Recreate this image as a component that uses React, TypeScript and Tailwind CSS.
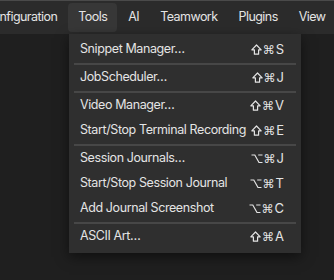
import React from "react";

type Item = { label: string; mod: "shift" | "opt"; key: string } | "sep";

const items: Item[] = [
  { label: "Snippet Manager…", mod: "shift", key: "S" },
  "sep",
  { label: "JobScheduler…", mod: "shift", key: "J" },
  "sep",
  { label: "Video Manager…", mod: "shift", key: "V" },
  { label: "Start/Stop Terminal Recording", mod: "shift", key: "E" },
  "sep",
  { label: "Session Journals…", mod: "opt", key: "J" },
  { label: "Start/Stop Session Journal", mod: "opt", key: "T" },
  { label: "Add Journal Screenshot", mod: "opt", key: "C" },
  "sep",
  { label: "ASCII Art…", mod: "shift", key: "A" },
];

const menus = ["Configuration", "Tools", "AI", "Teamwork", "Plugins", "View"];

function Shift() {
  return (
    <svg width="11" height="11" viewBox="0 0 11 11" className="mr-[1px]">
      <path
        d="M5.5 1 L10.2 5.8 L7.6 5.8 L7.6 10.2 L3.4 10.2 L3.4 5.8 L0.8 5.8 Z"
        fill="none"
        stroke="#e4e4e4"
        strokeWidth="1.2"
        strokeLinejoin="round"
      />
    </svg>
  );
}

function Opt() {
  return (
    <svg width="12" height="11" viewBox="0 0 12 11" className="mr-[1px]">
      <path
        d="M0.5 2 L3.8 2 L8 9.5 L11.5 9.5 M7.2 2 L11.5 2"
        fill="none"
        stroke="#e4e4e4"
        strokeWidth="1.2"
      />
    </svg>
  );
}

export default function App() {
  return (
    <div
      className="relative w-[334px] h-[280px] overflow-hidden bg-[#1f1f1f] text-[#e4e4e4] tracking-[-0.4px]"
      style={{ fontFamily: "Inter, 'Noto Sans', sans-serif" }}
    >
      <div className="h-[34px] bg-[#2b2b2b] border-t border-[#4a4a4a] flex items-center">
        <div className="flex items-center gap-[1px] -ml-[26px] whitespace-nowrap tracking-[-0.55px]">
          {menus.map((m) => (
            <div
              key={m}
              className={`px-[10px] h-[29px] flex items-center rounded-[4px] text-[12.5px] ${
                m === "Tools" ? "bg-[#373737]" : ""
              }`}
            >
              {m}
            </div>
          ))}
        </div>
      </div>
      <div className="absolute left-[69px] top-[34px] w-[232px] bg-[#2f2f2f] shadow-[0_4px_12px_rgba(0,0,0,0.5)] pt-[3px] pb-[4px] flex flex-col">
        {items.map((it, i) =>
          it === "sep" ? (
            <div key={i} className="mx-[5px] h-[2px] mt-[1px] bg-[#474747]" />
          ) : (
            <div
              key={i}
              className="h-[25px] pl-[11px] pr-[17px] flex items-center justify-between text-[12.5px] whitespace-nowrap"
            >
              <span>{it.label}</span>
              <span className="flex items-center tracking-[0px]">
                {it.mod === "shift" ? <Shift /> : <Opt />}
                <span className="text-[12px]" style={{ fontFamily: "'DejaVu Sans', sans-serif" }}>⌘</span>
                <span className="text-[13px] ml-[1px]">{it.key}</span>
              </span>
            </div>
          )
        )}
      </div>
    </div>
  );
}
